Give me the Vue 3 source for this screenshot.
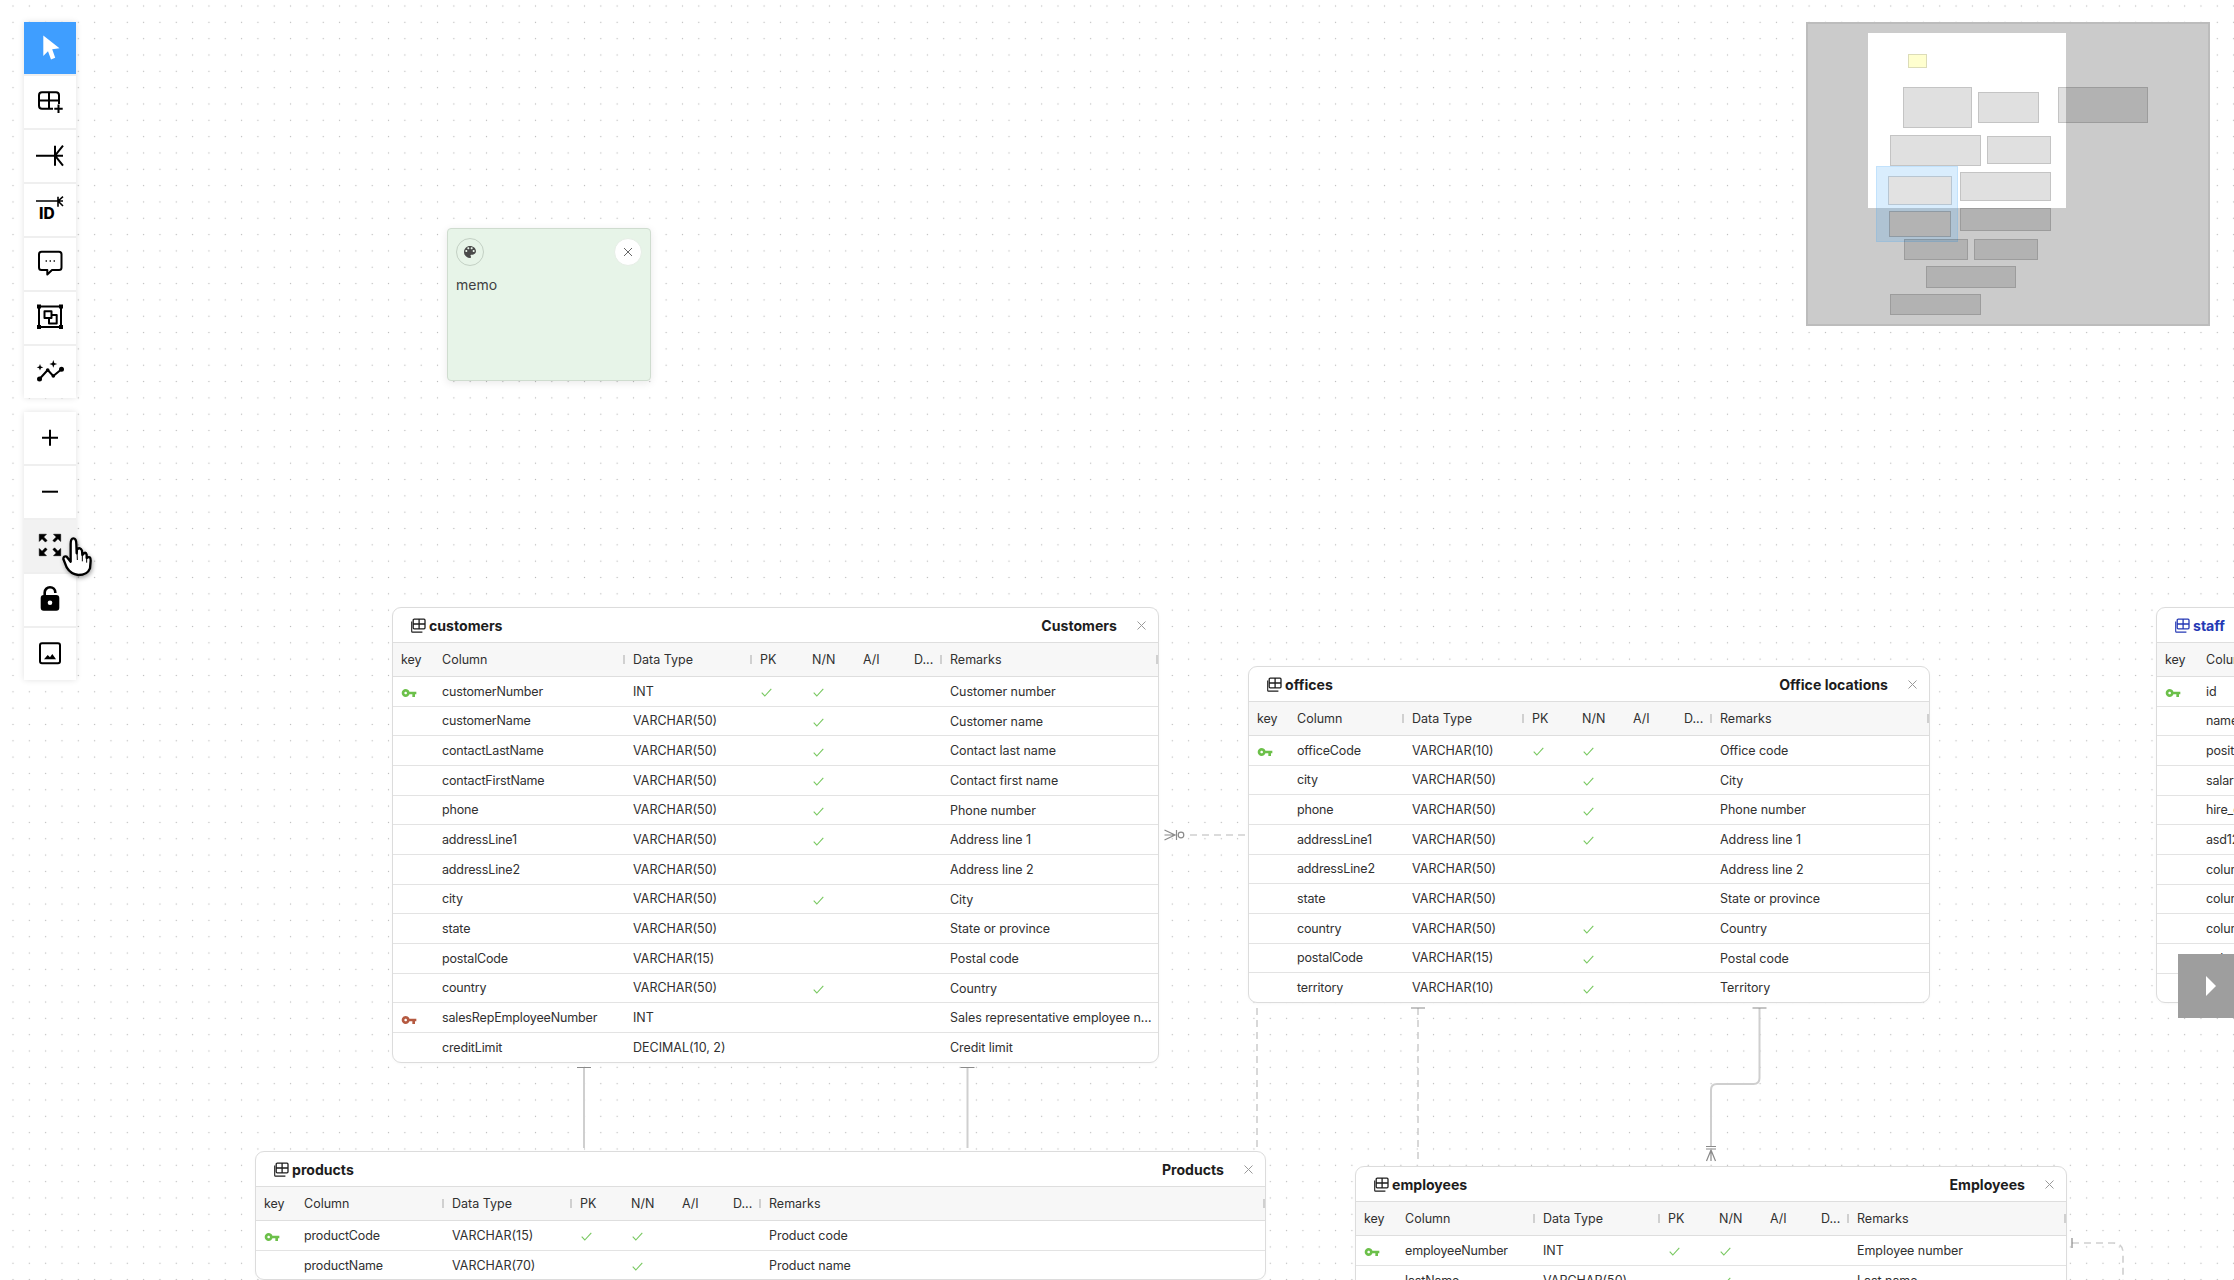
<script setup>
const TOOLS = [
  { id: 'select', active: true },
  { id: 'table' }, { id: 'rel' }, { id: 'id' }, { id: 'memo' }, { id: 'area' }, { id: 'auto' },
]
const VIEW = [{ id: 'plus' }, { id: 'minus' }, { id: 'fit', hover: true }, { id: 'lock' }, { id: 'image' }]

const r = (name, type, key, pk, nn, note) => ({ name, type, key, pk, nn, note })
const V = (n) => `VARCHAR(${n})`

const tables = [
  {
    name: 'customers', comment: 'Customers', left: 392, top: 607, width: 767,
    cols: '41px 191px 127px 52px 51px 51px 36px 1fr',
    rows: [
      r('customerNumber', 'INT', 'p', 1, 1, 'Customer number'),
      r('customerName', V(50), '', 0, 1, 'Customer name'),
      r('contactLastName', V(50), '', 0, 1, 'Contact last name'),
      r('contactFirstName', V(50), '', 0, 1, 'Contact first name'),
      r('phone', V(50), '', 0, 1, 'Phone number'),
      r('addressLine1', V(50), '', 0, 1, 'Address line 1'),
      r('addressLine2', V(50), '', 0, 0, 'Address line 2'),
      r('city', V(50), '', 0, 1, 'City'),
      r('state', V(50), '', 0, 0, 'State or province'),
      r('postalCode', V(15), '', 0, 0, 'Postal code'),
      r('country', V(50), '', 0, 1, 'Country'),
      r('salesRepEmployeeNumber', 'INT', 'f', 0, 0, 'Sales representative employee number'),
      r('creditLimit', 'DECIMAL(10, 2)', '', 0, 0, 'Credit limit'),
    ],
  },
  {
    name: 'offices', comment: 'Office locations', left: 1248, top: 666, width: 682,
    cols: '40px 115px 120px 50px 51px 51px 36px 1fr',
    rows: [
      r('officeCode', V(10), 'p', 1, 1, 'Office code'),
      r('city', V(50), '', 0, 1, 'City'),
      r('phone', V(50), '', 0, 1, 'Phone number'),
      r('addressLine1', V(50), '', 0, 1, 'Address line 1'),
      r('addressLine2', V(50), '', 0, 0, 'Address line 2'),
      r('state', V(50), '', 0, 0, 'State or province'),
      r('country', V(50), '', 0, 1, 'Country'),
      r('postalCode', V(15), '', 0, 1, 'Postal code'),
      r('territory', V(10), '', 0, 1, 'Territory'),
    ],
  },
  {
    name: 'products', comment: 'Products', left: 255, top: 1151, width: 1011,
    cols: '40px 148px 128px 51px 51px 51px 36px 1fr',
    rows: [
      r('productCode', V(15), 'p', 1, 1, 'Product code'),
      r('productName', V(70), '', 0, 1, 'Product name'),
    ],
  },
  {
    name: 'employees', comment: 'Employees', left: 1355, top: 1166, width: 712,
    cols: '41px 138px 125px 51px 51px 51px 36px 1fr',
    rows: [
      r('employeeNumber', 'INT', 'p', 1, 1, 'Employee number'),
      r('lastName', V(50), '', 0, 1, 'Last name'),
    ],
  },
  {
    name: 'staff', comment: 'Staff', left: 2156, top: 607, width: 700, selected: true,
    cols: '41px 148px 128px 51px 51px 51px 36px 1fr',
    rows: ['id', 'name', 'position', 'salary', 'hire_date', 'asd123', 'column1', 'column2', 'column3', 'column4', 'column5']
      .map((n, i) => r(n, 'INT', i === 0 ? 'p' : '', i === 0 ? 1 : 0, i === 0 ? 1 : 0, '')),
  },
]

const HEADS = ['key', 'Column', 'Data Type', 'PK', 'N/N', 'A/I', 'D...', 'Remarks']

// Minimap rectangles, in pixels inside the minimap frame. Items under the
// viewport marker are opaque, so the blue does not tint them.
const mini = [
  [340, 545, 232, 353], [565, 746, 247, 338], [805, 1073, 232, 338],
  [300, 572, 376, 467], [592, 782, 379, 461], [295, 485, 499, 584, 'light'],
  [510, 782, 487, 573], [298, 482, 604, 680, 'dark'], [510, 782, 595, 662],
  [343, 533, 688, 749], [553, 743, 688, 749], [409, 677, 769, 833],
  [300, 572, 853, 914],
].map(([a, b, c, d, solid]) => ({
  solid,
  style: { left: `${a / 3 - 18}px`, top: `${c / 3 - 14}px`, width: `${(b - a) / 3}px`, height: `${(d - c) / 3}px` },
}))
</script>

<template>
  <div class="canvas">
    <svg class="wires" width="2234" height="1280" viewBox="0 0 2234 1280">
      <g class="wire">
        <path d="M584 1068V1148" />
        <path d="M967.500 1068V1148" />
        <path d="M1759.500 1008V1078q0 6-6 6H1717q-6 0-6 6V1147" />
      </g>
      <g class="wire dash">
        <path d="M1190 835H1245" />
        <path d="M1257 1008V1150" />
        <path d="M1418 1008V1163" />
        <path d="M2072 1243H2113q10 0 10 10V1280" />
      </g>
      <g class="mark">
        <path d="M577 1067.500H591M960.500 1067.500H974.500M1411 1008H1425M1752.500 1008H1766.500" />
        <path d="M1164.500 830L1175 835L1164.500 840M1164.500 835H1175M1176.500 830V840" />
        <circle cx="1181" cy="835" r="2.800" />
        <path d="M1706 1146.500H1716M1706 1149H1716M1711 1150V1161M1711 1150L1706.500 1161M1711 1150L1715.500 1161" />
        <path d="M2072 1238V1248" />
      </g>
    </svg>

    <aside class="memo" style="left:447px;top:228px">
      <div class="memo-top">
        <button class="round palette">
          <svg width="16" height="16" viewBox="0 0 24 24"><path fill="#4a4a4a" d="M12 3c-4.970 0-9 4.030-9 9s4.030 9 9 9c.830 0 1.500-.670 1.500-1.500 0-.390-.150-.740-.390-1.010-.230-.260-.380-.610-.380-.990 0-.830.670-1.500 1.500-1.500H16c2.760 0 5-2.240 5-5 0-4.420-4.030-8-9-8zm-5.500 9c-.830 0-1.500-.670-1.500-1.500S5.670 9 6.500 9 8 9.670 8 10.500 7.330 12 6.500 12zm3-4C8.670 8 8 7.330 8 6.500S8.670 5 9.500 5s1.500.670 1.500 1.500S10.330 8 9.500 8zm5 0c-.830 0-1.500-.670-1.500-1.500S13.670 5 14.500 5s1.500.670 1.500 1.500S15.330 8 14.500 8zm3 4c-.830 0-1.500-.670-1.500-1.500S16.670 9 17.500 9s1.500.670 1.500 1.500-.670 1.500-1.500 1.500z" /></svg>
        </button>
        <button class="round shut">
          <svg width="10" height="10" viewBox="0 0 10 10"><path d="M1 1L9 9M9 1L1 9" stroke="#666" stroke-width="1" /></svg>
        </button>
      </div>
      <p class="memo-text">memo</p>
    </aside>

    <section
      v-for="t in tables"
      :key="t.name"
      class="table"
      :class="{ selected: t.selected }"
      :style="{ left: t.left + 'px', top: t.top + 'px', width: t.width + 'px' }"
    >
      <header class="title">
        <div class="name">
          <svg class="grid-ico" width="15" height="15" viewBox="0 0 15 15" fill="none" stroke="currentColor">
            <path stroke-width="1.300" d="M3.200 1.200h9.800a1 1 0 0 1 1 1v7.600a1 1 0 0 1-1 1H3.200a1 1 0 0 1-1-1V2.200a1 1 0 0 1 1-1zM2.200 6h11.800M8.100 1.200v9.600" />
            <path stroke-width="1.100" d="M.7 3.500v9.900a.7.700 0 0 0 .7.700h10" />
          </svg>
          <span>{{ t.name }}</span>
        </div>
        <div class="side">
          <span class="comment">{{ t.comment }}</span>
          <svg class="close" width="9" height="9" viewBox="0 0 9 9"><path d="M.5.500L8.500 8.500M8.500.500L.5 8.500" stroke="#999" stroke-width="1" /></svg>
        </div>
      </header>
      <div class="row head" :style="{ gridTemplateColumns: t.cols }">
        <div v-for="(h, i) in HEADS" :key="h" class="cell" :class="{ grip: [1, 2, 6, 7].includes(i) }">{{ h }}</div>
      </div>
      <div v-for="c in t.rows" :key="c.name" class="row" :style="{ gridTemplateColumns: t.cols }">
        <div class="cell">
          <svg v-if="c.key" class="key" :class="c.key === 'p' ? 'pk' : 'fk'" width="16" height="16" viewBox="0 0 24 24"><path fill="currentColor" d="M12.650 10C11.830 7.670 9.610 6 7 6c-3.310 0-6 2.690-6 6s2.690 6 6 6c2.610 0 4.830-1.670 5.650-4H17v4h4v-4h2v-4H12.650zM7 14c-1.100 0-2-.900-2-2s.900-2 2-2 2 .900 2 2-.900 2-2 2z" /></svg>
        </div>
        <div class="cell col-name">{{ c.name }}</div>
        <div class="cell">{{ c.type }}</div>
        <div class="cell"><svg v-if="c.pk" class="tick" width="11" height="9" viewBox="0 0 11 9"><path d="M.7 4.700L3.800 8L10.300.8" /></svg></div>
        <div class="cell"><svg v-if="c.nn" class="tick" width="11" height="9" viewBox="0 0 11 9"><path d="M.7 4.700L3.800 8L10.300.8" /></svg></div>
        <div class="cell"></div>
        <div class="cell"></div>
        <div class="cell note">{{ c.note }}</div>
      </div>
    </section>

    <nav class="toolbar">
      <div class="group">
        <button v-for="b in TOOLS" :key="b.id" class="tool" :class="{ active: b.active }">
          <svg width="52" height="52" viewBox="0 0 52 52">
            <path v-if="b.id === 'select'" fill="#fff" d="M19.300 13.500V34L24 29.300L27 37.500L31.200 35.800L28.200 27.300L35.500 26.300Z" />
            <g v-else-if="b.id === 'table'" class="ln">
              <path d="M18 16.300H32a3 3 0 0 1 3 3V28M29 32.700H18a3 3 0 0 1-3-3V19.300a3 3 0 0 1 3-3M15 24.500H35M25 16.300V32.700" />
              <path d="M34.500 28.500V37M30.300 32.700H38.700" />
            </g>
            <g v-else-if="b.id === 'rel'" class="ln"><path d="M12 25.700H39M31 15.700V35.700M31 25.700L39 15.700M31 25.700L39 35.700" /></g>
            <g v-else-if="b.id === 'id'">
              <g class="ln thin"><path d="M12 17H39M34 12.700V22.700M34 17L39 12.700M34 17L39 22" /></g>
              <text class="id" x="15" y="34.500">ID</text>
            </g>
            <g v-else-if="b.id === 'memo'" class="ln">
              <path d="M17.500 13.700H35a2.500 2.500 0 0 1 2.500 2.500V29.500a2.500 2.500 0 0 1-2.500 2.500H28L23.300 36.500V32H17.500a2.500 2.500 0 0 1-2.500-2.500V16.200a2.500 2.500 0 0 1 2.500-2.500z" />
              <path class="dots" d="M21.700 23H22.700M25.700 23H26.700M29.700 23H30.700" />
            </g>
            <g v-else-if="b.id === 'area'">
              <path class="ln" d="M15 14.500H37V35H15ZM20.500 19.300H27.500V26H20.500ZM25 26V31.500H32.700V23H27.500" />
              <path d="M13 12.500h4v4h-4zM35 12.500h4v4h-4zM13 33h4v4h-4zM35 33h4v4h-4z" />
            </g>
            <g v-else-if="b.id === 'auto'">
              <path class="ln" d="M15.500 33L23.700 24L29.300 30L37.500 23.300" />
              <circle cx="15.500" cy="33" r="2.500" /><circle cx="23.700" cy="24" r="1.800" /><circle cx="29.300" cy="30" r="1.800" /><circle cx="37.500" cy="23.300" r="2.500" />
              <path d="M16 18l.9 2.400 2.400.9-2.400.9-.9 2.400-.9-2.400-2.400-.9 2.400-.9zM29.300 14l1 2.900 2.900 1-2.900 1-1 2.900-1-2.900-2.900-1 2.900-1z" />
            </g>
          </svg>
        </button>
      </div>
      <div class="group">
        <button v-for="b in VIEW" :key="b.id" class="tool" :class="{ hover: b.hover }">
          <svg width="52" height="52" viewBox="0 0 52 52">
            <path v-if="b.id === 'plus'" class="ln" d="M26 17.700V33.700M18 25.700H34" />
            <path v-else-if="b.id === 'minus'" class="ln" d="M18 25.700H34" />
            <path v-else-if="b.id === 'fit'" transform="translate(11.700 10.700) scale(1.190)" stroke="#000" stroke-width=".5" d="M15 3l2.300 2.300-2.890 2.870 1.420 1.420L18.700 6.700 21 9V3h-6zM3 9l2.300-2.300 2.870 2.890 1.420-1.420L6.700 5.300 9 3H3v6zm6 12l-2.300-2.300 2.890-2.870-1.420-1.420L5.300 17.300 3 15v6h6zm12-6l-2.300 2.300-2.870-2.890-1.420 1.420 2.890 2.870L15 21h6v-6z" />
            <g v-else-if="b.id === 'lock'">
              <path class="ln thick" d="M20.700 21.500V18.500a5.300 5.300 0 0 1 10.600 0v.6" />
              <rect x="16.700" y="21" width="18.600" height="15.700" rx="3" />
              <circle cx="26" cy="28.700" r="2.300" fill="#fff" />
            </g>
            <g v-else-if="b.id === 'image'">
              <rect class="ln" x="16" y="15.300" width="20" height="20" rx="2" />
              <path d="M20 31.300L23.700 27L26 29.300L28.300 26L32 31.300Z" />
            </g>
          </svg>
        </button>
      </div>
    </nav>

    <svg class="hand" width="35" height="44" viewBox="180 525 105 132">
      <path d="M212 552Q212 535 220 535Q229 535 229 552L230 580L231 568Q241 560 246 572L247 585Q257 572 260 584V594Q272 586 272 602L270 625Q262 645 235 645Q212 642 200 622L190 597Q190 587 200 590L212 605Z" fill="#fff" stroke="#000" stroke-width="7" stroke-linejoin="round" />
      <path d="M231 570L232 600M247 585V604M260 592V608" stroke="#000" stroke-width="3" fill="none" />
    </svg>

    <div class="minimap">
      <div class="mini-view"></div>
      <div class="mini-port"></div>
      <div class="mini-memo"></div>
      <div v-for="(m, i) in mini" :key="i" class="mini-item" :class="m.solid" :style="m.style"></div>
    </div>

    <button class="expand"><svg width="10" height="20" viewBox="0 0 10 20"><path fill="#fff" d="M0 0L10 10L0 20Z" /></svg></button>
  </div>
</template>

<style>
html, body { margin: 0; background: #fff; overflow: hidden; }
</style>

<style scoped>
.canvas {
  position: relative;
  width: 2234px;
  height: 1280px;
  overflow: hidden;
  background-color: #fff;
  background-image: radial-gradient(circle, #b8b8b8 0.6px, transparent 1px);
  background-size: 16.33px 16.33px;
  background-position: 4.83px -2.17px;
  font-family: Inter, "Liberation Sans", sans-serif;
  color: #2b2b2b;
}
button { border: 0; padding: 0; background: none; font: inherit; }

.wires { position: absolute; left: 0; top: 0; }
.wire { fill: none; stroke: #cfcfcf; stroke-width: 2; }
.wire.dash { stroke-dasharray: 7 5; stroke-width: 1.6; }
.mark { fill: none; stroke: #8a8a8a; stroke-width: 1.2; }

/* memo */
.memo {
  position: absolute;
  box-sizing: border-box;
  width: 204px;
  height: 153px;
  padding: 9px 8px;
  background: #e7f4e8;
  border: 1px solid #cfdccf;
  border-radius: 4px;
  box-shadow: 0 2px 8px rgba(0, 0, 0, .09);
}
.memo-top { display: flex; justify-content: space-between; }
.round {
  box-sizing: border-box;
  width: 28px;
  height: 28px;
  border-radius: 50%;
  display: flex;
  align-items: center;
  justify-content: center;
}
.palette { border: 1px solid #c3d0c4; }
.shut { background: #fff; border: 1px solid #e6eee6; }
.memo-text { margin: 10px 0 0; padding: 0; font-size: 14px; line-height: 18px; color: #404040; }

/* tables */
.table {
  position: absolute;
  box-sizing: border-box;
  background: #fff;
  border: 1px solid #dcdcdc;
  border-radius: 9px;
  box-shadow: 0 1px 3px rgba(0, 0, 0, .03);
}
.title {
  box-sizing: border-box;
  height: 35px;
  display: flex;
  align-items: center;
  justify-content: space-between;
  padding: 1px 12px 0 18px;
  border-bottom: 1px solid #dedede;
  font-size: 14.1px;
  font-weight: 700;
  color: #1d1d1d;
}
.selected .title { color: #2438b5; }
.name { display: flex; align-items: center; gap: 3px; }
.grid-ico { flex: none; }
.side { display: flex; align-items: center; gap: 20px; }
.close { flex: none; }

.row {
  box-sizing: border-box;
  height: 29.67px;
  display: grid;
  align-items: center;
  border-bottom: 1px solid #e3e3e3;
  font-size: 12.5px;
  color: #303030;
}
.table > .row:last-child { border-bottom: 0; height: 28.7px; }
.row.head { height: 34px; background: #f7f7f7; border-bottom-color: #dedede; }
.cell {
  position: relative;
  box-sizing: border-box;
  height: 100%;
  padding: 0 0 0 8px;
  display: flex;
  align-items: center;
  white-space: nowrap;
  min-width: 0;
}
.col-name { letter-spacing: -0.15px; }
.head .col-name { letter-spacing: 0; }
.note { display: block; line-height: 29px; padding-right: 3px; letter-spacing: -0.05px; overflow: hidden; text-overflow: ellipsis; }
.head .note { line-height: 33px; letter-spacing: 0; }
.grip::after {
  content: '';
  position: absolute;
  right: 0;
  top: 12px;
  width: 2px;
  height: 9px;
  background: #d0d0d0;
}
.key { margin-top: 4px; }
.pk { color: #6cc04a; }
.fk { color: #b55a41; }
.tick { margin: 3px 0 0 1px; fill: none; stroke: #78c860; stroke-width: 1.1; }

/* toolbar */
.toolbar {
  position: absolute;
  left: 24px;
  top: 22px;
  display: flex;
  flex-direction: column;
  gap: 14px;
}
.group {
  display: flex;
  flex-direction: column;
  gap: 2px;
  background: #efefef;
  box-shadow: 0 0 6px rgba(0, 0, 0, .12);
}
.tool { width: 52px; height: 52px; background: #fff; display: block; }
.tool svg { display: block; }
.tool.active { background: #3f9eff; }
.tool.hover { background: #f2f2f2; }
.ln { fill: none; stroke: #000; stroke-width: 2; stroke-linejoin: round; }
.ln.thin { stroke-width: 1.6; }
.ln.thick { stroke-width: 2.6; }
.dots { stroke-width: 2; }
.id { font-family: Inter, "Liberation Sans", sans-serif; font-size: 15.5px; font-weight: 800; }

.hand {
  position: absolute;
  left: 60px;
  top: 535px;
  filter: drop-shadow(1px 2px 2px rgba(0, 0, 0, .35));
}

/* minimap */
.minimap {
  position: absolute;
  left: 1806px;
  top: 22px;
  box-sizing: border-box;
  width: 404px;
  height: 304px;
  background: #cbcbcb;
  border: 2px solid #bcbcbc;
}
.mini-view { position: absolute; left: 60px; top: 9px; width: 198px; height: 175px; background: #fff; }
.mini-memo {
  position: absolute;
  left: 100px;
  top: 30px;
  box-sizing: border-box;
  width: 19px;
  height: 14px;
  background: #ffffcf;
  border: 1px solid #dcdcb8;
}
.mini-item {
  position: absolute;
  box-sizing: border-box;
  background: rgba(0, 0, 0, .12);
  border: 1px solid rgba(0, 0, 0, .12);
}
.mini-item.light { background: #e2e2e2; border-color: #b8c6d2; }
.mini-item.dark { background: #b3b3b3; border-color: #8f9aa3; }
.mini-port {
  position: absolute;
  left: 68px;
  top: 142px;
  width: 82px;
  height: 76px;
  background: rgba(66, 165, 245, .2);
  box-shadow: inset 0 0 0 1px rgba(66, 165, 245, .15);
}

.expand {
  position: absolute;
  left: 2178px;
  top: 954px;
  width: 56px;
  height: 64px;
  background: #9e9e9e;
  display: flex;
  align-items: center;
  padding-left: 28px;
  box-sizing: border-box;
}
</style>
